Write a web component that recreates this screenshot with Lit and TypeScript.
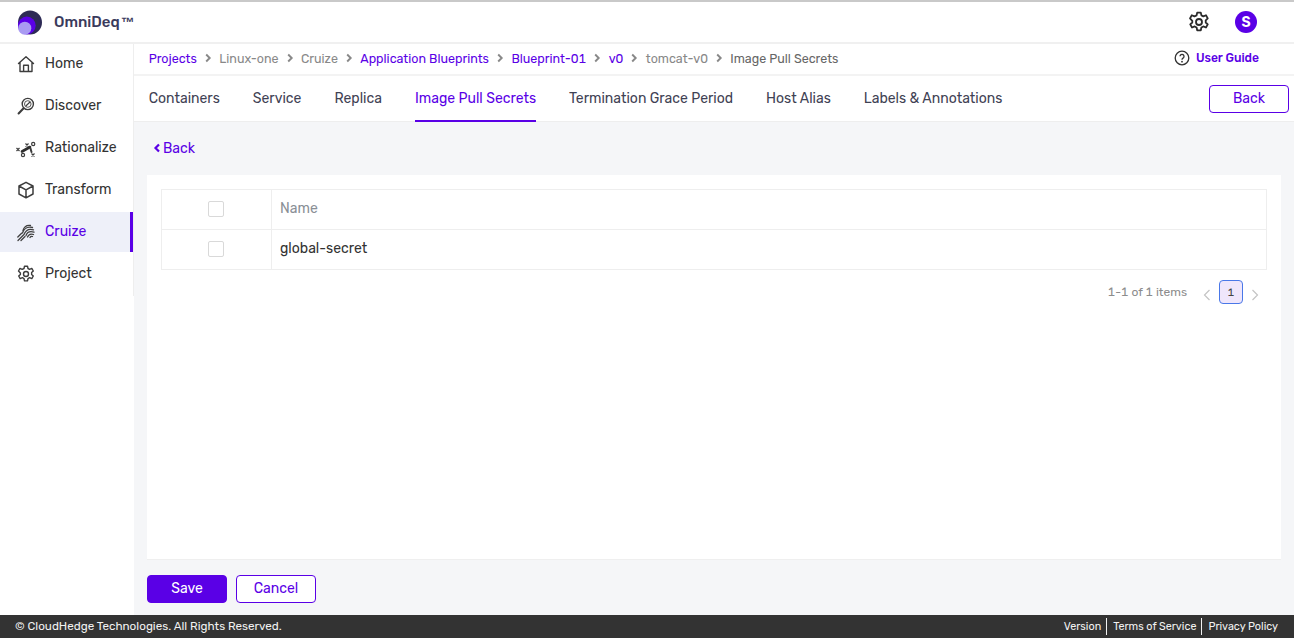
import { LitElement, html, css, svg } from "lit";
import { customElement } from "lit/decorators.js";

const icons: Record<string, unknown> = {
  home: svg`<path d="M2.500 9.500 10 2.800l7.500 6.700M4 8.500v9h12v-9M7.600 17.500v-6.300h4.800v6.300" fill="none" stroke="#3d3d3d" stroke-width="1.400" stroke-linejoin="round" stroke-linecap="round"/>`,
  discover: svg`<circle cx="11.800" cy="8" r="5.600" fill="none" stroke="#3d3d3d" stroke-width="1.400"/><circle cx="11.800" cy="8" r="3.300" fill="none" stroke="#555" stroke-width="1"/><path d="M9.800 10 14 6" stroke="#3d3d3d" stroke-width="1.100"/><path d="M7.600 12.200 2.600 17.400" stroke="#3d3d3d" stroke-width="2.100" stroke-linecap="round"/>`,
  rationalize: svg`<g stroke="#3d3d3d" stroke-width="1.200" fill="none"><path d="M.5 10l3 3M3.500 10l-3 3M9.500 5.500l3 3M12.500 5.500l-3 3M15.500 15.500l3 3M18.500 15.500l-3 3"/><circle cx="7" cy="17" r="1.600"/><circle cx="17.200" cy="6" r="1.600"/></g><path d="M6 13.500 14 9" stroke="#2d2d2d" stroke-width="2.600" stroke-linecap="round"/><path d="M14.500 10.500l1 3.500" stroke="#3d3d3d" stroke-width="2" stroke-linecap="round"/>`,
  transform: svg`<path d="M10 2.300 17 6v8l-7 3.800L3 14V6zM3 6l7 3.900L17 6M10 9.900v7.900" fill="none" stroke="#3d3d3d" stroke-width="1.500" stroke-linejoin="round"/>`,
  cruize: svg`<g fill="none" stroke="#404040" stroke-width="1.300" stroke-linecap="round"><path d="M7 8.500C8 5 11 3 14.500 3.500"/><path d="M6.500 11C8 6.500 12 4.500 16.500 5.500"/><path d="M8 12.500C9.500 8.500 13 6.500 17.500 7.800"/><path d="M10 13.500C11 10.500 14 9 18 10.200"/><path d="M11.500 15C12.500 12.500 15 11.500 17.500 12.500"/><path d="M14 15.500c.6-1 1.600-1.300 2.500-1"/><path d="M2 18.500l5.500-5.500M5 18.500l4-4M1.800 15l3.800-3.800"/></g>`,
  project: svg`<path d="M8.500 2.200h3l.5 2.300 1.600.8 2.200-.9 1.500 2.600-1.700 1.600v1.800l1.700 1.600-1.500 2.600-2.200-.9-1.600.9-.5 2.300h-3l-.5-2.300-1.600-.9-2.200.9-1.500-2.600 1.700-1.600V9L2.500 7 4 4.400l2.200.9L8 4.500z" fill="none" stroke="#3d3d3d" stroke-width="1.400" stroke-linejoin="round"/><circle cx="10" cy="10" r="2.500" fill="none" stroke="#3d3d3d" stroke-width="1.400"/>`,
};

const gear = svg`<path d="M8.500 2.200h3l.5 2.300 1.600.8 2.200-.9 1.500 2.600-1.700 1.600v1.800l1.700 1.600-1.500 2.600-2.200-.9-1.600.9-.5 2.300h-3l-.5-2.300-1.600-.9-2.200.9-1.500-2.600 1.700-1.600V9L2.500 7 4 4.400l2.200.9L8 4.500z" fill="none" stroke="#2b2b2b" stroke-width="1.500" stroke-linejoin="round"/><circle cx="10" cy="10" r="2.500" fill="none" stroke="#2b2b2b" stroke-width="1.500"/>`;

@customElement("app-root")
export class AppRoot extends LitElement {
  static styles = css`
    :host { display: flex; flex-direction: column; width: 1294px; height: 638px; overflow: hidden; font-family: Rubik, Inter, "Noto Sans", sans-serif; font-feature-settings: "tnum"; color: #333; background: #fff; font-size: 14px; }
    * { box-sizing: border-box; }
    .top { height: 44px; flex: none; border-top: 2px solid #c9c9c9; border-bottom: 2px solid #f0f0f0; display: flex; align-items: center; padding-left: 18px; background: #fff; }
    .logo { width: 24px; height: 25px; display: block; }
    .brand { margin-left: 12px; font-size: 15px; font-weight: 500; color: #3a3a5c; display: flex; align-items: baseline; }
    .tm { font-family: "Liberation Sans", sans-serif; font-size: 13.5px; font-weight: 700; margin-left: 1px; }
    .top-right { margin-left: auto; display: flex; align-items: center; gap: 24px; padding-right: 37px; }
    .gear { width: 24px; height: 24px; display: block; }
    .avatar { width: 22px; height: 22px; border-radius: 50%; background: #5a00e6; color: #fff; font-size: 14px; font-weight: 600; display: flex; align-items: center; justify-content: center; }
    .body { flex: 1; display: flex; min-height: 0; }
    .side { width: 134px; flex: none; }
    .nav { height: 252px; border-right: 1px solid #eee; }
    .item { height: 40px; margin-bottom: 2px; display: flex; align-items: center; padding-left: 16px; gap: 9px; color: #333; position: relative; width: 133px; }
    .item svg { width: 20px; height: 20px; flex: none; }
    .item span { padding-bottom: 2px; }
    .item.on { background: #eef0f9; color: #5a00e6; }
    .item.on::after { content: ""; position: absolute; right: 0; top: 0; bottom: 0; width: 3px; background: #5a00e6; }
    .main { flex: 1; min-width: 0; display: flex; flex-direction: column; background: #f5f6f8; }
    .crumbs { height: 32px; flex: none; background: #fff; border-bottom: 2px solid #f3f3f3; display: flex; align-items: center; padding: 0 35px 2px 14.7px; font-size: 12.5px; color: #888; }
    .crumbs a { color: #5a00e6; }
    .crumbs .cur { color: #666; }
    .sep { width: 22.4px; height: 10px; flex: none; display: block; }
    .guide { margin-left: auto; display: flex; align-items: center; gap: 6px; color: #5a00e6; font-weight: 500; font-size: 12.1px; }
    .guide svg { width: 16px; height: 16px; display: block; }
    .tabs { height: 46px; flex: none; background: #fff; border-bottom: 1px solid #eee; display: flex; align-items: stretch; padding: 0 5px 0 14.7px; gap: 33px; }
    .tab { display: flex; align-items: center; color: #3f4254; border-bottom: 2px solid transparent; height: 46px; }
    .tab.on { color: #5a00e6; border-bottom-color: #5a00e6; }
    .btn { width: 80px; height: 28px; border-radius: 4px; display: flex; align-items: center; justify-content: center; border: 1px solid #5a00e6; color: #5a00e6; background: #fff; padding-bottom: 1px; }
    .btn.fill { background: #5a00e6; color: #fff; }
    .tabs .btn { margin-left: auto; align-self: center; }
    .content { flex: 1; min-height: 0; padding: 0 13px 12px; display: flex; flex-direction: column; }
    .back { height: 53px; flex: none; display: flex; align-items: center; gap: 2px; padding: 0 0 0 6px; color: #5a00e6; }
    .back svg { width: 8px; height: 10px; display: block; margin-top: -1px; }
    .card { flex: 1; min-height: 0; background: #fff; border-bottom: 1px solid #efefef; padding: 14px; }
    .table { border: 1px solid #eee; }
    .row { height: 39px; display: flex; align-items: stretch; }
    .row + .row { height: 40px; border-top: 1px solid #eee; }
    .cc { width: 110px; flex: none; border-right: 1px solid #eee; display: flex; align-items: center; justify-content: center; padding: 0 1px 2px 0; }
    .box { width: 16px; height: 16px; border: 1px solid #d9d9d9; border-radius: 2px; background: #fff; }
    .nc { padding: 0 0 2px 8px; display: flex; align-items: center; }
    .row.head .nc { color: #8a8f96; }
    .pager { display: flex; align-items: center; justify-content: flex-end; margin-top: 10px; height: 24px; font-size: 12px; color: #8c8c8c; padding-right: 6px; }
    .pager svg { width: 12px; height: 12px; margin-top: 5px; display: block; }
    .pager .p { margin-left: 14px; }
    .num { width: 24px; height: 24px; margin: 0 6px; border: 1px solid #4a78e8; border-radius: 4px; background: #efe6fb; color: #444; display: flex; align-items: center; justify-content: center; font-size: 11px; }
    .actions { display: flex; gap: 9px; margin-top: 15px; flex: none; }
    .foot { height: 23px; flex: none; background: #333; color: #f2f2f2; font-size: 11.7px; display: flex; align-items: center; padding: 0 16px 1px 15px; }
    .links { margin-left: auto; display: flex; align-items: center; font-size: 10.8px; }
    .links span { padding: 0 5px 0 6px; height: 17px; display: flex; align-items: center; border-left: 1px solid #f2f2f2; }
    .links span:first-child { border-left: 0; }
    .links span:last-child { padding-right: 0; }
  `;

  render() {
    const nav = [["home", "Home"], ["discover", "Discover"], ["rationalize", "Rationalize"], ["transform", "Transform"], ["cruize", "Cruize"], ["project", "Project"]];
    const crumbs: [string, string][] = [["a", "Projects"], ["g", "Linux-one"], ["g", "Cruize"], ["a", "Application Blueprints"], ["a", "Blueprint-01"], ["a", "v0"], ["g", "tomcat-v0"], ["cur", "Image Pull Secrets"]];
    const tabs = ["Containers", "Service", "Replica", "Image Pull Secrets", "Termination Grace Period", "Host Alias", "Labels & Annotations"];
    return html`
      <div class="top">
        <svg class="logo" viewBox="0 0 24 25"><circle cx="12" cy="12.500" r="12" fill="#2d2a55"/><circle cx="8.800" cy="15.500" r="8.900" fill="#5a00e6"/><circle cx="6.800" cy="18.200" r="6.500" fill="#a99bf2"/></svg>
        <span class="brand">OmniDeq<span class="tm">™</span></span>
        <div class="top-right">
          <svg class="gear" viewBox="0 0 20 20">${gear}</svg>
          <div class="avatar">S</div>
        </div>
      </div>
      <div class="body">
        <div class="side">
          <div class="nav">
            ${nav.map(([k, t]) => html`<div class="item ${t === "Cruize" ? "on" : ""}"><svg viewBox="0 0 20 20">${icons[k]}</svg><span>${t}</span></div>`)}
          </div>
        </div>
        <div class="main">
          <div class="crumbs">
            ${crumbs.map(([c, t], i) => html`${i ? html`<svg class="sep" viewBox="0 0 22 10"><path d="M9 1.500l3.500 3.500L9 8.500" fill="none" stroke="#888" stroke-width="1.900"/></svg>` : ""}<span class=${c === "a" ? "" : c}>${c === "a" ? html`<a>${t}</a>` : t}</span>`)}
            <div class="guide">
              <svg viewBox="0 0 16 16"><circle cx="8" cy="8" r="6.800" fill="none" stroke="#333" stroke-width="1.300"/><path d="M6 6.300a2 2 0 1 1 3 1.800c-.7.4-1 .8-1 1.600" fill="none" stroke="#333" stroke-width="1.300"/><circle cx="8" cy="11.700" r=".9" fill="#333"/></svg>
              User Guide
            </div>
          </div>
          <div class="tabs">
            ${tabs.map((t) => html`<div class="tab ${t === "Image Pull Secrets" ? "on" : ""}">${t}</div>`)}
            <div class="btn">Back</div>
          </div>
          <div class="content">
            <div class="back"><svg viewBox="0 0 8 10"><path d="M6 1.500 2.500 5 6 8.500" fill="none" stroke="#5a00e6" stroke-width="2.200"/></svg><span>Back</span></div>
            <div class="card">
              <div class="table">
                <div class="row head"><div class="cc"><div class="box"></div></div><div class="nc">Name</div></div>
                <div class="row"><div class="cc"><div class="box"></div></div><div class="nc">global-secret</div></div>
              </div>
              <div class="pager">
                <span>1-1 of 1 items</span>
                <svg class="p" viewBox="0 0 12 12"><path d="M8.500 1 3.500 6l5 5" fill="none" stroke="#c4c4c4" stroke-width="1.200"/></svg>
                <div class="num">1</div>
                <svg viewBox="0 0 12 12"><path d="M3.500 1l5 5-5 5" fill="none" stroke="#c4c4c4" stroke-width="1.200"/></svg>
              </div>
            </div>
            <div class="actions"><div class="btn fill">Save</div><div class="btn">Cancel</div></div>
          </div>
        </div>
      </div>
      <div class="foot">
        <span>© CloudHedge Technologies. All Rights Reserved.</span>
        <div class="links"><span>Version</span><span>Terms of Service</span><span>Privacy Policy</span></div>
      </div>
    `;
  }
}
